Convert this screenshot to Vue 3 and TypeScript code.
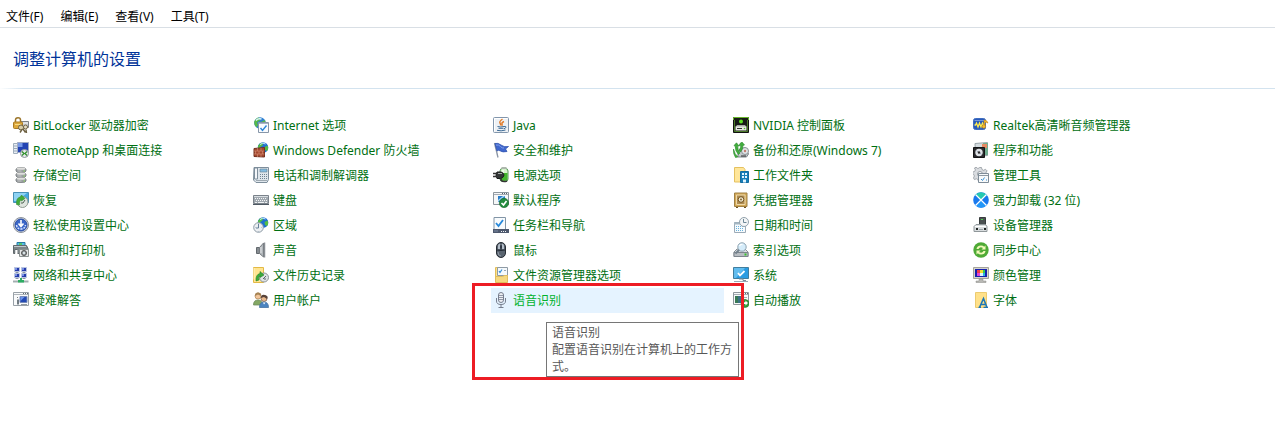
<script setup lang="ts">
interface Applet {
  name: string
  icon: string
  tip?: string
}

const menus: string[] = ['文件(F)', '编辑(E)', '查看(V)', '工具(T)']

const globe =
  '<circle cx="7" cy="6" r="5.800" fill="#2f7fd0"/><path d="M1.300 4.500Q3 .8 6 .5L7.500 3 4 5.500 5 8 3.500 10.500Q.8 8 1.300 4.500ZM8 5l4-2Q13 7 11 9L8.500 8Z" fill="#58b947"/><path d="M3 3.500Q5 1 8.500 2" stroke="#d9f2ff" stroke-width="1.500" fill="none"/>'
const globeRight =
  '<circle cx="10" cy="5.500" r="5.300" fill="#1f6fd0"/><path d="M5 4Q7 .5 9.500.7L10 3 7 5.500 8 8 6.500 9Q4.500 7 5 4ZM11.500 5l3-1.500Q16 7 14 9l-2-1Z" fill="#55bd43"/><path d="M7 2.500Q10 0 12.500 2" stroke="#c7ecff" fill="none"/>'
const folder =
  '<path d="M.5.5h10v15H.5Z" fill="#ffe491" stroke="#e3b944"/><path d="M1 12.500V1" stroke="#fff3c4"/>'

const applets: Applet[] = [
  {
    name: 'BitLocker 驱动器加密',
    icon: '<path d="M8 4.500h7.500v6H8Z" fill="#c9ccd0" stroke="#7c8187"/><path d="M9 6h6" stroke="#f5f5f5"/><path d="M2.500 6V3Q2.500.8 5 .8T7.500 3v3" fill="none" stroke="#9c762b" stroke-width="1.500"/><rect x=".5" y="5" width="9" height="6.500" rx="1" fill="#dda83c" stroke="#a97a24"/><path d="M2 7.500h6" stroke="#f7db86"/><circle cx="8" cy="10.500" r="2.500" fill="#d8cda9" stroke="#6e6142"/><circle cx="12.500" cy="10" r="2" fill="#e3dcc5" stroke="#6e6142"/><path d="m9 12.500-2 3m6-3 .5 3.500M10 12l2.500 3.500" stroke="#6e6142" stroke-width="1.400"/>',
  },
  {
    name: 'Internet 选项',
    icon: globe + '<path d="M5.500 5.500h10v10h-10Z" fill="#f8fbff" stroke="#8796a8"/><path d="M6 6.500h9" stroke="#a7b6c7"/><path d="m7.500 11 2 2.500 4-5" fill="none" stroke="#2b86d8" stroke-width="1.400"/>',
  },
  {
    name: 'Java',
    icon: '<rect x=".5" y=".5" width="15" height="15" rx="1" fill="#edf1f5" stroke="#8296ac"/><path d="M1.500 14.500v-13h13" stroke="#fff" fill="none"/><path d="M9.500 2Q6 4.500 7 6t.5 2.500M11 4.500Q8.500 5.500 9 7t-.5 1.500" fill="none" stroke="#e27a27" stroke-width="1.400"/><path d="M4.500 9.500Q8 10.500 11 9.500M5.500 11.300h5M4 13.300Q8 14.500 12.500 13M11 9.500q3-.5 1.500 1.500l-1.500.8" fill="none" stroke="#3d6b96"/>',
  },
  {
    name: 'NVIDIA 控制面板',
    icon: '<path d="M.5.5h15v15H.5Z" fill="#181b17" stroke="#111"/><path d="M.5 3V.5h15V3" stroke="#69b52b" fill="none"/><path d="M1.500 3v11.500h13V3" stroke="#4c7a2a" fill="none"/><circle cx="8" cy="4.500" r="2" fill="#5ee020"/><path d="M4 8h8l1.500 2H2.500Z" fill="#a7aca4"/><path d="M2.500 9.500h11v4h-11Z" fill="#e7ebe2"/><path d="M4 11.500h5" stroke="#333"/><circle cx="11.500" cy="11.500" r=".8" fill="#51bd21"/>',
  },
  {
    name: 'Realtek高清晰音频管理器',
    icon: '<rect x=".5" y="1.500" width="12" height="11" rx="2" fill="#2859ba" stroke="#3f6ec0"/><path d="M1.500 3.500h10" stroke="#7398dd"/><path d="M1.500 8h1l1-2 1.500 4L6.500 6 8 10l1.500-4 1 2h1" fill="none" stroke="#ffec4d" stroke-width="1.300"/><path d="M11 8.500V3q3 0 4 3-1.500-1-3-.5v4" fill="#f6bc2c" stroke="#c58a1d" stroke-width=".7"/><circle cx="10.800" cy="9.500" r="1.800" fill="#f6bc2c" stroke="#b97b14" stroke-width=".6"/>',
  },
  {
    name: 'RemoteApp 和桌面连接',
    icon: '<path d="M.5 1.500h4v10h-4Z" fill="#e8edf4" stroke="#a1afbd"/><path d="M1 4h3M1 6.500h3M1 9h3" stroke="#99a9ba"/><path d="M4.500.5h11v10h-11Z" fill="#2243b3" stroke="#9fabc5"/><path d="M5 1h4.500v4H5Z" fill="#7698e7"/><circle cx="11.500" cy="11.500" r="4" fill="#e6e9ec" stroke="#8b9399"/><path d="m9 9.500 2 2-2 2m5-4-2 2 2 2" fill="none" stroke="#31912d" stroke-width="1.300"/>',
  },
  {
    name: 'Windows Defender 防火墙',
    icon: globeRight + '<path d="M1 6.500 11.500 5.500v9.500L1 14.500Z" fill="#a4482f" stroke="#71301f"/><path d="M1 9h10.500M1 12h10.500M4.500 6v3M8 6v3M2.500 9v3M6 9v3M9.500 9v3M4.500 12v3M8 12v3" stroke="#d69076" stroke-width=".6"/>',
  },
  {
    name: '安全和维护',
    icon: '<path d="m1.500 1 3.500 14.500" stroke="#8994a4" stroke-width="1.300"/><path d="M2 1.500Q5 .5 8 3t7.500 1.500L12.500 7l1.500 2.500Q9.500 10.500 7.500 9T4 9Z" fill="#3f67ce" stroke="#2f52ae" stroke-width=".8"/><path d="M3 3q3-.5 4.500 1.500T11 6" fill="none" stroke="#839fe9"/>',
  },
  {
    name: '备份和还原(Windows 7)',
    icon: '<path d="M5 9.500 8.500 6h4l3 6-2 3H5Z" fill="#c3c9cc" stroke="#7f878b"/><circle cx="12" cy="9" r="3.500" fill="#e1e5e7" stroke="#8a9297"/><circle cx="12" cy="9" r="1.200" fill="#c47f70"/><path d="M8 14h5" stroke="#333"/><path d="M1 3.500 3.500.8 6 4H4.800Q4.500 8 7 11l-1.500 1.500Q1.800 9 2.300 4.500ZM7 1.500 9 0l2.500 3-1.500.5Q10 7 7.500 10L6 8Q8 6 7.700 3.500L6 3.800ZM.5 7Q1.500 12 5 15l-2.500.5Q-.2 11.500.5 7Z" fill="#42ad3d" stroke="#2b8a31" stroke-width=".6"/>',
  },
  {
    name: '程序和功能',
    icon: '<path d="M2 1.500 14.500.5v13l-12 1Z" fill="#d4dce0" stroke="#9ba5aa"/><path d="M10 1h5v12h-4Z" fill="#70ad8f"/><path d="M9 2h5v4H9Z" fill="#e68a64"/><path d="M.5 5.500h11v10H.5Z" fill="#29292c" stroke="#131315"/><circle cx="6" cy="10.500" r="3.700" fill="#dfe2e6"/><path d="m3.500 8.500 2 2M8.500 12.500l-2-2" stroke="#9eaabd"/><circle cx="6" cy="10.500" r="1.200" fill="#29292c"/>',
  },
  {
    name: '存储空间',
    icon: [0, 5, 10]
      .map(
        (y) =>
          `<path d="M3 ${y + 2}q0-1.500 5-1.500t5 1.500v2q0 1.500-5 1.500t-5-1.500Z" fill="#9b9fa2" stroke="#74787b" stroke-width=".8"/><ellipse cx="8" cy="${y + 1.700}" rx="4.500" ry="1.100" fill="#dededc"/><path d="M4.500 ${y + 4}h4" stroke="#c3c5c6"/><path d="M10.500 ${y + 4}h1.500" stroke="#8fe05d"/>`,
      )
      .join(''),
  },
  {
    name: '电话和调制解调器',
    icon: '<path d="M1 .5h14.500v12L14 15.500H3L.5 13Z" fill="#dfe6ec" stroke="#7e8e9b"/><path d="M1.500 1h3v11h-3Z" fill="#f5f7fa" stroke="#7e8e9b"/><path d="M7 2h7v3H7Z" fill="#83bce1" stroke="#648090" stroke-width=".6"/><path d="M7 7.500h7M7 9.500h7M7 11.500h7" stroke="#708392" stroke-dasharray="1 1"/><path d="M3 13.500h11" stroke="#9ea9b1"/>',
  },
  {
    name: '电源选项',
    icon: '<rect x="7" y="1.500" width="8" height="13" rx="2.500" fill="#d5f2cb" stroke="#58975a"/><path d="M8.500 0h5v2h-5Z" fill="#adb7ad"/><path d="M7.500 6h7v7q-3 2-7 0Z" fill="#43b52e"/><path d="M10 3v5" stroke="#f3fff0" stroke-width="1.500"/><path d="M4 5h4q3 1 3 3t-3 3.500H4Q2 8 4 5Z" fill="#343737" stroke="#181b1b"/><path d="M0 6.500h4M0 9.500h4M8 11v2q2 2.500 6 1" fill="none" stroke="#333" stroke-width="1.500"/><path d="M5 6.500h4" stroke="#a4aaa9"/>',
  },
  {
    name: '工作文件夹',
    icon: '<path d="M1.500.5h9l1.500 2v12.500H1.500Z" fill="#ffe69a" stroke="#e5c160"/><path d="M7.500 4.500h8v11h-8Z" fill="#177eb8" stroke="#126ca1"/><path d="M9 6h2v2H9Zm3 0h2v2h-2ZM9 9h2v2H9Zm3 0h2v2h-2ZM10 12.500h3v3h-3Z" fill="#e1f4ff"/>',
  },
  {
    name: '管理工具',
    icon: '<path d="m6.500.5 2 0 .5 2 1.500.8 2-1 1.500 1.500-1 2 .8 1.400 2 .8v2H13l-5 4-2.500.5-.6-2-1.500-.7-2 .8L.5 11l.9-2-.7-1.500-1-.5V5l2-.6.7-1.500L1.500 1 3 .2l1.800 1.300 1.300-.5Z" fill="#d9dce0" stroke="#9399a0" stroke-width=".8"/><circle cx="7" cy="7" r="2.500" fill="#fff" stroke="#999fa5"/><path d="M5.500 6.500h10v9h-10Z" fill="#f8fafb" stroke="#7f8c98"/><path d="M6 8.500h9" stroke="#8f9aa3"/><path d="m8 12 1.500 1.500 2-3M13 13h1" fill="none" stroke="#3e91d2"/>',
  },
  {
    name: '恢复',
    icon: '<path d="M.5.5h15v10H.5Z" fill="#44a9df" stroke="#4890b6"/><path d="M1 1h13L4 9H1Z" fill="#8fd3f4"/><circle cx="9.500" cy="10" r="5.500" fill="#dfe5df" stroke="#8e9b90"/><path d="M3.500 12.500Q3 5.500 7.500 5L8.500 3 12 6.500 8.500 9V7.500Q6 9 6.500 13Z" fill="#43ad37" stroke="#348f36" stroke-width=".6"/><path d="m10 11 2-3m-2 3H8" stroke="#4e6253"/>',
  },
  {
    name: '键盘',
    icon: '<path d="M.5 3.500h15v8H.5Z" fill="#a0a8af" stroke="#7a828a"/><path d="M1 4.500h14" stroke="#d8dde1"/><path d="M2 6.500h12M3 8.500h11" stroke="#f4f5f6" stroke-dasharray="1 1"/><path d="M2 10.500h2m1 0h6m1 0h2" stroke="#edf0f2"/><path d="M0 12.500h16" stroke="#4e5963"/>',
  },
  {
    name: '默认程序',
    icon: '<path d="M.5.5h15v12H.5Z" fill="#f6f7f8" stroke="#8d969d"/><path d="M1 2.500h14" stroke="#a6adb4"/><path d="M9 1.500h1m1 0h1m1 0h1" stroke="#54616b"/><path d="M5 4h7v6H5Z" fill="#287bc8"/><path d="m5 8 5-4h2L5 10Z" fill="#a2d4f5"/><circle cx="11" cy="11" r="4.700" fill="#238b3d" stroke="#166829" stroke-width=".6"/><path d="m8.500 11 2 2 3-4" fill="none" stroke="#fff" stroke-width="1.700"/>',
  },
  {
    name: '凭据管理器',
    icon: '<path d="M1.500 1h12.500v13.500H1.500Z" fill="#d4a957" stroke="#9f8044"/><path d="M3.500 3h8.500v9.500H3.500Z" fill="#b08c50" stroke="#ecd9ab"/><circle cx="8" cy="7.500" r="2.800" fill="#eee7ce" stroke="#735421"/><circle cx="8" cy="7.500" r="1" fill="#836738"/><path d="M3 15.500h2m6 0h2" stroke="#70541f"/>',
  },
  {
    name: '强力卸载 (32 位)',
    icon: '<circle cx="8" cy="8" r="7.800" fill="#1878ee"/><path d="M2.200 3Q8-2.500 13.800 3L8 8Z" fill="#25c9b0"/><path d="M2.200 13Q8 18.500 13.800 13L8 8Z" fill="#2296f8"/><path d="m2.500 2.500 11 11m0-11-11 11" stroke="#fff" stroke-width="1.200"/>',
  },
  {
    name: '轻松使用设置中心',
    icon: '<circle cx="8" cy="8" r="7.500" fill="#d9dde4" stroke="#8c929b"/><circle cx="8" cy="8" r="6" fill="#3a66c8" stroke="#2a4ca0"/><path d="M8 3v6M5.500 6.500 8 9.500l2.500-3" fill="none" stroke="#fff" stroke-width="1.600"/><path d="M3.500 8Q4 12 8 12t4.500-4" fill="none" stroke="#d0e0ff" stroke-width="1.500" stroke-dasharray="2 1"/>',
  },
  {
    name: '区域',
    icon: globeRight + '<circle cx="5.500" cy="10.500" r="4.800" fill="#eceff2" stroke="#8e9ba6"/><path d="M5.500 7v4H3" fill="none" stroke="#647f98"/><path d="M5.500 6.500v.5m0 7v.5M2 10.500h.5m6 0h.5" stroke="#8da0b1"/>',
  },
  {
    name: '任务栏和导航',
    icon: '<path d="M1 .5h11.500v12H1Z" fill="#f8fbfd" stroke="#8295a6"/><path d="m3 6 2.500 3L10 3" fill="none" stroke="#2788da" stroke-width="1.800"/><path d="M0 12h16v4H0Z" fill="#4e596e"/><path d="M1 14h4" stroke="#7c8da5"/><path d="M8 14.500h1m1 0h1m1 0h1" stroke="#f2f4f8"/>',
  },
  {
    name: '日期和时间',
    icon: '<path d="M1.500 5.500h11v10h-11Z" fill="#f6fbfe" stroke="#9cabb7"/><path d="M1 5.500h11v2H1Z" fill="#a5b6c2"/><path d="M3 9.500h8M3 11.500h8M3 13.500h8" stroke="#69b2dc" stroke-dasharray="1 1"/><circle cx="11" cy="5" r="4.500" fill="#f3f5f6" stroke="#92a2ad"/><path d="M10.500 2v3.500h3" fill="none" stroke="#6d8797"/>',
  },
  {
    name: '设备管理器',
    icon: '<path d="M6.500.5h6v9h-6Z" fill="#4b5152" stroke="#373c3d"/><path d="M8 2.500h2" stroke="#52cf51"/><path d="M1 9.500 3 7.500h9.500l1.500 2v5H1Z" fill="#d9dddf" stroke="#90979a"/><path d="M2 9.500h11" stroke="#fff"/><path d="M3 11h2v2H3Zm8 0h2v2h-2Z" fill="#242827"/><path d="M6 12.500h4" stroke="#9aa2a6"/>',
  },
  {
    name: '设备和打印机',
    icon: '<path d="M4 .5h8v3H4Z" fill="#57bce8" stroke="#287aa0"/><path d="M6 1h3v2H6Z" fill="#54c56b"/><path d="M.5 3.500h13l1.500 3v5H4V7.500H2v4H.5Z" fill="#7d8589" stroke="#62696c"/><path d="M1 4.500h12" stroke="#bfc8cc"/><path d="M2.500 8h2v5h-2Z" fill="#fff"/><path d="M6.500 7.500h9v7h-9Z" fill="#e5e7e7" stroke="#8a9190"/><circle cx="11" cy="11" r="2.500" fill="#8f9698" stroke="#555"/><circle cx="11" cy="11" r="1.200" fill="#dce4e7"/>',
  },
  {
    name: '声音',
    icon: '<path d="M3.500 5.500h3v6h-3Z" fill="#868c91" stroke="#62686d"/><path d="m6.500 5.500 4-4.500v14l-4-3.500Z" fill="#b1b6ba" stroke="#777c80"/><path d="M11.500.5v15" fill="none" stroke="#8a8f94" stroke-width="1.500"/><path d="M8 5v6" stroke="#e4e6e8"/>',
  },
  {
    name: '鼠标',
    icon: '<rect x="3.500" y=".5" width="9" height="15" rx="4.500" fill="#59636f" stroke="#272d34"/><path d="M5 4q0-2.500 3-2.500T11 4v3H5Z" fill="#b5bfca"/><path d="M8 1v7M4 8q4 1 8 0" stroke="#222a34" fill="none"/><rect x="7" y="3" width="2" height="4" rx="1" fill="#303945"/><path d="M5 10q0 4 3 4" fill="none" stroke="#919ba8"/>',
  },
  {
    name: '索引选项',
    icon: '<path d="m1 10 3-3h8l3 3v4.500H1Z" fill="#d8dce0" stroke="#868e95"/><path d="M1 10.500h14v4H1Z" fill="#b8bdc2" stroke="#7d858d"/><path d="M11.500 12.500h2" stroke="#35c52b" stroke-width="2"/><circle cx="9" cy="5" r="4.200" fill="#d5ecfa" stroke="#8da2b0"/><path d="M6.500 4q1-2 3-1.500" fill="none" stroke="#fff" stroke-width="1.300"/><path d="m6 8-3.500 3.500" stroke="#74828d" stroke-width="2"/>',
  },
  {
    name: '同步中心',
    icon: '<circle cx="8" cy="8" r="7.700" fill="#4eaa36"/><path d="M3.500 7Q4 3.500 8 3.500q2 0 3.200 1.300L12.500 3.500v4h-4L10 6Q7 4 5.500 7ZM12.500 9Q12 12.500 8 12.500q-2 0-3.200-1.300L3.500 12.500v-4h4L6 10q3 2 4.500-1Z" fill="#f2f9b9"/>',
  },
  {
    name: '网络和共享中心',
    icon: [0.5, 6.5]
      .map((y) =>
        [1.5, 8.5]
          .map(
            (x) =>
              `<path d="M${x} ${y}h5v4h-5Z" fill="#263cab" stroke="#b9c4e0"/><path d="M${x + 0.5} ${y + 0.5}h2v2h-2Z" fill="#7790e2"/><path d="M${x + 1} ${y + 5}h3" stroke="#8b96a4"/>`,
          )
          .join(''),
      )
      .join('') + '<path d="M0 14.500h15.500" stroke="#a4aeb1" stroke-width="2"/><path d="M7 11h2v2h2v2.500H5V13h2Z" fill="#2cad62"/>',
  },
  {
    name: '文件历史记录',
    icon: folder + '<circle cx="11" cy="10.500" r="4.500" fill="#dfe3e5" stroke="#8d9598"/><path d="M3 14Q2.500 7.500 7 6.500V4.500L11 8l-4 2.500V8.800Q5 9.500 6 13Z" fill="#3cac3c" stroke="#277f29" stroke-width=".6"/><path d="m10 12 3-3m-2 3h2" stroke="#5d676b"/>',
  },
  {
    name: '文件资源管理器选项',
    icon: '<path d="M2.500.5h10v14h-10Z" fill="#ffe287" stroke="#e0bd5c"/><path d="M4.500.5h10v8h-10Z" fill="#f5f9fc" stroke="#8e9aa5"/><path d="m6 4 1 1.500L9 2.500" fill="none" stroke="#348ed6" stroke-width="1.200"/><path d="M11 3.500h2" stroke="#9ba7b1"/><path d="M2.500 9.500h7l2-1h3v7h-12Z" fill="#f6d87f" stroke="#e0bd5c"/>',
  },
  {
    name: '系统',
    icon: '<path d="M.5.500h15v11H.5Z" fill="#2b9ce2" stroke="#407e9f"/><path d="M1 1h11L3 11H1Z" fill="#62bdef"/><path d="m5 6 2 2.500L11.500 4" fill="none" stroke="#fff" stroke-width="1.800"/><path d="M6 12h4v1.500h3" stroke="#798e9b" fill="none"/><path d="M1 14.500h14" stroke="#99a9b5"/>',
  },
  {
    name: '颜色管理',
    icon: '<path d="M.5.5h15v11H.5Z" fill="#d5d4cd" stroke="#a4a39b"/><path d="M2 2h12v8H2Z" fill="#1720ae"/><path d="M4 3h3v3H4Z" fill="#ee3c4c"/><path d="M7 3h3v3H7Z" fill="#f4dd31"/><path d="M10 3h2v3h-2Z" fill="#36ca54"/><path d="M4 6h3v3H4Z" fill="#e046d8"/><path d="M7 6h3v3H7Z" fill="#dff5ff"/><path d="M10 6h2v3h-2Z" fill="#28b7df"/><path d="M6 12h4v2h3v1.500H3V14h3Z" fill="#b8b8b4" stroke="#8b8b87" stroke-width=".5"/>',
  },
  {
    name: '疑难解答',
    icon: '<path d="M.5.5h15v13H.5Z" fill="#f9fafb" stroke="#98a0a7"/><path d="M1 2.500h14" stroke="#afb5ba"/><path d="M10 1.500h1m1 0h1m1 0h1" stroke="#5c6870"/><path d="M4 7.500h2v5H4Z" fill="#717b82"/><path d="M4.500 6v-1" stroke="#747b80"/><path d="M7 4.500h7v6H7Z" fill="#2349b4" stroke="#778bba"/><path d="M7.500 5h4l-4 4Z" fill="#6c95ed"/><path d="M8 12.500h6" stroke="#9199a1"/>',
  },
  {
    name: '用户帐户',
    icon: '<circle cx="5" cy="4" r="3" fill="#f1c59a" stroke="#b58c5e" stroke-width=".8"/><path d="M2 4q0-4 3.500-3.500T8 4L5 2.500Z" fill="#a58353"/><path d="M.5 13q0-5 4.500-5t4 5Z" fill="#84a864" stroke="#6e8d5f" stroke-width=".8"/><circle cx="11" cy="6.500" r="3" fill="#e9b98d" stroke="#7b5a48" stroke-width=".8"/><path d="M8 6q0-4 4-3t2 4l-3-2Z" fill="#57433a"/><path d="M6.500 15.500q0-5.500 4.500-5.500t4.500 5.500Z" fill="#4b84c0" stroke="#4773a2" stroke-width=".8"/><path d="m10 10.500 1 2 1.500-2" fill="#fff"/>',
  },
  {
    name: '语音识别',
    icon: '<rect x="5.500" y=".5" width="5" height="10" rx="2.500" fill="#eef0f5" stroke="#777e8e"/><path d="M6 3.500h4M6 5.500h4M6 7.500h4" stroke="#9098a8"/><path d="M3.500 6v3q0 3.500 4.500 3.500T12.500 9V6M8 12.500v3m-2.500 0h5" fill="none" stroke="#777e8e"/>',
    tip: '配置语音识别在计算机上的工作方式。',
  },
  {
    name: '自动播放',
    icon: '<path d="M.5.5h15v12H.5Z" fill="#f7f8f9" stroke="#8e969c"/><path d="M1 2.500h14" stroke="#a7aeb4"/><path d="M10 1.500h1m1 0h1m1 0h1" stroke="#5d6870"/><path d="M2 4h6v7H2Z" fill="#3b7187"/><path d="M2 4h3v7H2Z" fill="#397954"/><path d="M10 5.500h4M10 7.500h3" stroke="#a6acb0"/><circle cx="12" cy="11.500" r="4" fill="#319d3a" stroke="#207829" stroke-width=".6"/><path d="M9.500 12q1-2 3-2V8.500l2.500 2.500-2.500 2.500V12Z" fill="#fff"/>',
  },
  {
    name: '字体',
    icon: '<path d="M2.500.5h11v15h-11Z" fill="#ffe18a" stroke="#eccb70"/><path d="M12.500 10.500v5" stroke="#f6d26c" stroke-width="2"/><path d="M5.500 15.500H8m2.500 0H15m-8.500 0 4-9 3.500 9m-6-3h5" fill="none" stroke="#1d77b8" stroke-width="1.600"/>',
  },
]

const active = '语音识别'
</script>

<template>
  <div class="window">
    <nav class="menubar" aria-label="菜单栏">
      <button v-for="menu in menus" :key="menu" type="button">{{ menu }}</button>
    </nav>
    <header class="heading">
      <h1>调整计算机的设置</h1>
    </header>
    <main>
      <ul class="applets">
        <li v-for="applet in applets" :key="applet.name" :class="{ active: applet.name === active }">
          <a href="#">
            <svg class="icon" viewBox="0 0 16 16" aria-hidden="true" v-html="applet.icon"></svg>
            <span>{{ applet.name }}</span>
          </a>
          <template v-if="applet.tip">
            <div class="tooltip" role="tooltip">
              <div>{{ applet.name }}</div>
              <div>{{ applet.tip }}</div>
            </div>
            <div class="marker" aria-hidden="true"></div>
          </template>
        </li>
      </ul>
    </main>
  </div>
</template>

<style>
body {
  margin: 0;
  background: #fff;
}
</style>

<style scoped>
.window {
  min-height: 100vh;
  font-family: "Noto Sans", "Noto Sans CJK SC", sans-serif;
  font-size: 12px;
  line-height: 17px;
}

.menubar {
  display: flex;
  gap: 17px;
  padding: 8px 6px 2px;
  border-bottom: 1px solid #d9dfe5;
}

.menubar button {
  padding: 0;
  border: 0;
  background: none;
  color: #000;
  font-family: "Noto Sans", "Noto Sans CJK SC", sans-serif;
  font-size: 12px;
  line-height: 17px;
}

.heading {
  padding: 19px 13px 17px;
  border-bottom: 1px solid;
  border-image: linear-gradient(to right, #fff, #d3e3ef 24px) 1;
}

h1 {
  margin: 0;
  color: #003399;
  font-size: 16px;
  font-weight: 400;
  line-height: 24px;
}

.applets {
  display: grid;
  grid-template-columns: repeat(auto-fill, 233px);
  column-gap: 7px;
  margin: 0;
  padding: 24px 11px;
  list-style: none;
}

li {
  position: relative;
}

a {
  display: flex;
  align-items: flex-start;
  gap: 4px;
  padding: 4px 0 4px 2px;
  color: #006f12;
  text-decoration: none;
  white-space: nowrap;
}

.icon {
  flex: none;
  width: 16px;
  height: 16px;
}

.active {
  z-index: 1;
}

.active a {
  background: #e5f3ff;
  color: #00b22d;
}

.tooltip {
  position: absolute;
  top: 34px;
  left: 55px;
  box-sizing: border-box;
  width: 193px;
  padding: 1px 5px;
  border: 1px solid #767676;
  background: #fff;
  color: #575757;
}

.marker {
  position: absolute;
  top: -5px;
  left: -19px;
  box-sizing: border-box;
  width: 272px;
  height: 97px;
  border: 3px solid #ed1c24;
  pointer-events: none;
}
</style>
